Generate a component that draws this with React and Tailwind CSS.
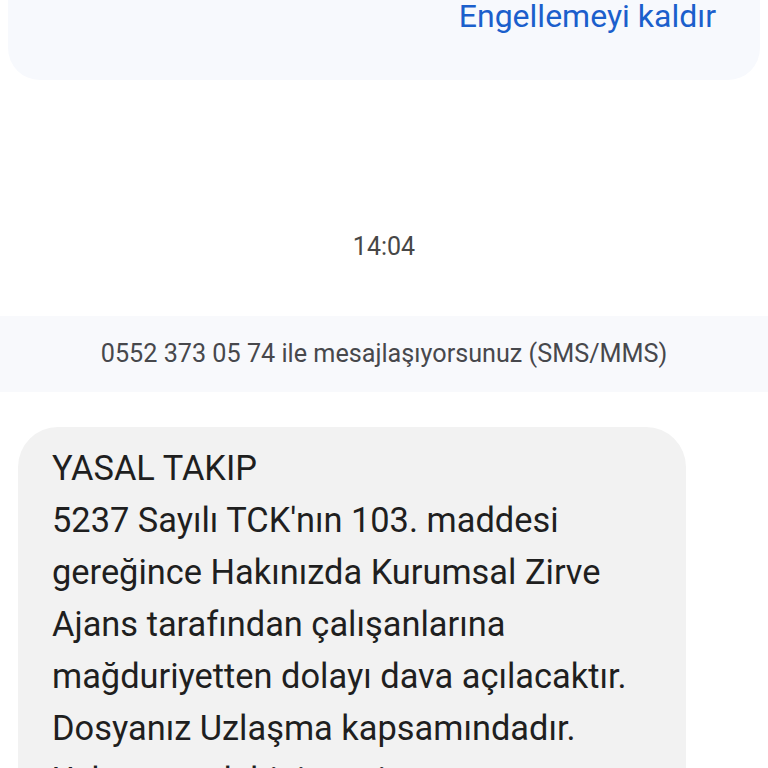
export default function App() {
  const lines = [
    "YASAL TAKIP",
    "5237 Sayılı TCK'nın 103. maddesi",
    "gereğince Hakınızda Kurumsal Zirve",
    "Ajans tarafından çalışanlarına",
    "mağduriyetten dolayı dava açılacaktır.",
    "Dosyanız Uzlaşma kapsamındadır.",
    "Uzlaşma talebiniz varise",
  ];
  return (
    <div className="h-[768px] w-[768px] overflow-hidden bg-white font-['Roboto',sans-serif]">
      <div className="mx-2 flex h-[80px] justify-end rounded-b-[32px] bg-[#f7f9fd] pr-[44px]">
        <span className="text-[32px] leading-[32px] text-[#1b5fcc]">Engellemeyi kaldır</span>
      </div>
      <div className="mt-[153px] text-center text-[25px] leading-[28px] text-[#474747]">14:04</div>
      <div className="mt-[55px] flex h-[76px] items-center justify-center bg-[#f8f9fc] text-[25.2px] text-[#47484c]">
        0552 373 05 74 ile mesajlaşıyorsunuz (SMS/MMS)
      </div>
      <div className="ml-[18px] mt-[35px] w-[668px] rounded-[40px] bg-[#f2f2f2] px-[34px] pt-[15px] pb-6">
        {lines.map((l, i) => (
          <div key={i} className="text-[34.4px] leading-[52px] text-[#1f1f1f]">
            {l}
          </div>
        ))}
      </div>
    </div>
  );
}
